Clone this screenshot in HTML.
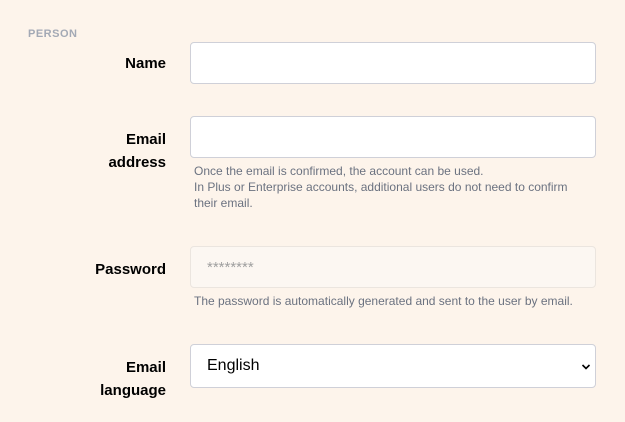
<!DOCTYPE html>
<html><head><style>
body{margin:0;width:625px;height:422px;background:#fdf4eb;font-family:"Liberation Sans",sans-serif;position:relative;overflow:hidden}
.a{position:absolute}
.h{left:28px;top:28px;font-size:11px;font-weight:bold;color:#a3a9b5;letter-spacing:.5px}
.l{right:459px;text-align:right;font-weight:bold;font-size:15px;line-height:23px;color:#000}
.i{left:190px;width:404px;height:40px;border:1px solid #cfd0d8;border-radius:4px;background:#fff}
.t{left:194px;font-size:12px;line-height:16px;color:#6b7280}
</style></head><body>
<div class="a h">PERSON</div>
<div class="a l" style="top:52px">Name</div>
<div class="a i" style="top:42px"></div>
<div class="a l" style="top:128px">Email<br>address</div>
<div class="a i" style="top:116px"></div>
<div class="a t" style="top:163px">Once the email is confirmed, the account can be used.<br>In Plus or Enterprise accounts, additional users do not need to confirm<br>their email.</div>
<div class="a l" style="top:258px">Password</div>
<div class="a i" style="top:246px;background:#fcf7f2;border-color:#ebe5df"><span class="a" style="left:16px;top:12px;font-size:15px;color:#a0a0a0">********</span></div>
<div class="a t" style="top:293px">The password is automatically generated and sent to the user by email.</div>
<div class="a l" style="top:356px">Email<br>language</div>
<div class="a i" style="top:344px;height:42px"><span class="a" style="left:16px;top:12px;font-size:16px;color:#000">English</span>
<svg class="a" style="right:4px;top:18px" width="10" height="8" viewBox="0 0 10 8"><path d="M1.5 2 L5 5.5 L8.5 2" fill="none" stroke="#000" stroke-width="1.6"/></svg></div>
</body></html>
